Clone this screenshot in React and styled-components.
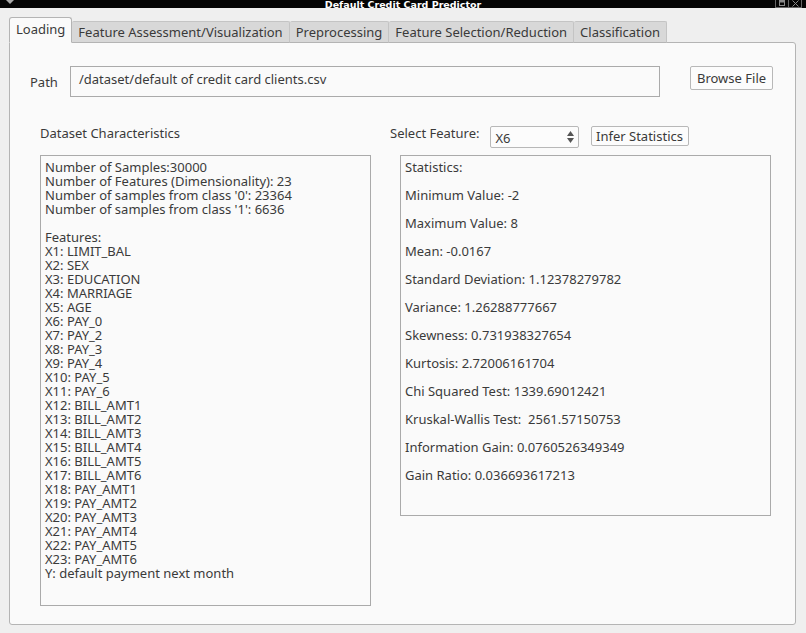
import React from "react"
import styled, { createGlobalStyle } from "styled-components"

const GlobalStyle = createGlobalStyle`
  html, body {
    margin: 0;
    padding: 0;
    background: #efefef;
  }
  body {
    font-family: "Noto Sans", "Open Sans", sans-serif;
    font-size: 13px;
    color: #3a3a3a;
  }
`

const Window = styled.div`
  width: 806px;
  height: 633px;
  display: flex;
  flex-direction: column;
  background: #efefef;
  overflow: hidden;
`

const TitleBar = styled.div`
  height: 9px;
  background: #050505;
  display: flex;
  align-items: center;
  justify-content: space-between;
  position: relative;
  padding: 0 4px 0 4px;
`

const TitleText = styled.div`
  position: absolute;
  left: 0;
  right: 0;
  top: 0;
  text-align: center;
  color: #fff;
  font-weight: bold;
  font-size: 9.5px;
  line-height: 9px;
  font-family: "DejaVu Sans", sans-serif;
`

const WinButtons = styled.div`
  display: flex;
  margin-top: -1px;
  position: relative;
  z-index: 1;
`

const WinButton = styled.div`
  width: 12px;
  height: 8px;
  border: 1px solid #666;
  border-top: none;
  display: flex;
  align-items: center;
  justify-content: center;
  & + & {
    border-left: none;
  }
`

const Body = styled.div`
  flex: 1;
  padding: 9px 10px 8px 9px;
  display: flex;
  flex-direction: column;
`

const TabBar = styled.div`
  display: flex;
  align-items: flex-end;
  height: 26px;
  position: relative;
  z-index: 1;
  margin-bottom: -1px;
`

const Tab = styled.div`
  height: ${p => (p.$active ? "26px" : "22px")};
  padding: 0 6px;
  display: flex;
  align-items: center;
  font-size: 13px;
  white-space: nowrap;
  box-sizing: border-box;
  background: ${p => (p.$active ? "#fafafa" : "#d8d8d8")};
  border: 1px solid ${p => (p.$active ? "#b4b4b4" : "#c4c4c4")};
  border-bottom: ${p => (p.$active ? "1px solid #fafafa" : "1px solid #b4b4b4")};
  border-left: ${p => (p.$first || p.$active ? "" : "none")};
  border-radius: ${p => (p.$active ? "3px 3px 0 0" : "2px 2px 0 0")};
  color: #3a3a3a;
  padding-bottom: ${p => (p.$active ? "2px" : "0")};
`

const Panel = styled.div`
  flex: 1;
  background: #fafafa;
  border: 1px solid #b4b4b4;
  border-radius: 0 3px 3px 3px;
  display: flex;
  flex-direction: column;
  padding: 22px 22px 18px 20px;
`

const PathRow = styled.div`
  display: flex;
  align-items: center;
  height: 32px;
`

const Label = styled.span`
  font-size: 13px;
  color: #3a3a3a;
  white-space: nowrap;
`

const PathLabel = styled(Label)`
  width: 40px;
  padding-top: 1px;
`

const PathInput = styled.div`
  width: 591px;
  height: 31px;
  box-sizing: border-box;
  border: 1px solid #aaaaaa;
  background: #fafafa;
  padding: 3px 8px 0;
  font-size: 13px;
  display: flex;
  align-items: flex-start;
`

const Button = styled.div`
  height: ${p => p.$h || 24}px;
  box-sizing: border-box;
  padding: 0 6px;
  border: 1px solid #b8b8b8;
  border-radius: 2px;
  background: #fcfcfc;
  display: flex;
  align-items: center;
  justify-content: center;
  font-size: 13px;
  white-space: nowrap;
  color: #3a3a3a;
`

const BrowseButton = styled(Button)`
  margin-left: 30px;
  margin-top: -6px;
  width: 83px;
`

const InferButton = styled(Button)`
  margin-left: 2px;
  margin-top: 1px;
  width: 98px;
`

const Columns = styled.div`
  flex: 1;
  display: flex;
  margin-top: 28px;
  padding-left: 10px;
`

const LeftCol = styled.div`
  width: 331px;
  display: flex;
  flex-direction: column;
`

const RightCol = styled.div`
  margin-left: 19px;
  width: 381px;
  display: flex;
  flex-direction: column;
`

const ColHeader = styled.div`
  height: 30px;
  display: flex;
  align-items: flex-start;
  gap: 10px;
`

const HeaderLabel = styled(Label)`
  margin-top: -1px;
`

const TextBox = styled.div`
  box-sizing: border-box;
  border: 1px solid #aaaaaa;
  background: #fafafa;
  padding: 4px 4px;
  font-size: 13px;
  line-height: 14px;
  white-space: pre;
  color: #3a3a3a;
  height: ${p => p.$h}px;
  margin-left: ${p => p.$ml || 0}px;
  width: ${p => p.$w}px;
`

const SpinBox = styled.div`
  width: 89px;
  height: 22px;
  margin-top: 1px;
  box-sizing: border-box;
  border: 1px solid #b8b8b8;
  border-radius: 2px;
  background: #fcfcfc;
  display: flex;
  align-items: center;
  justify-content: space-between;
  padding: 0 4px 0 5px;
  font-size: 13px;
`

const SpinValue = styled.span`
  padding-top: 1px;
`

const Arrows = styled.div`
  display: flex;
  flex-direction: column;
  gap: 2px;
`

const datasetText = `Number of Samples:30000
Number of Features (Dimensionality): 23
Number of samples from class '0': 23364
Number of samples from class '1': 6636

Features:
X1: LIMIT_BAL
X2: SEX
X3: EDUCATION
X4: MARRIAGE
X5: AGE
X6: PAY_0
X7: PAY_2
X8: PAY_3
X9: PAY_4
X10: PAY_5
X11: PAY_6
X12: BILL_AMT1
X13: BILL_AMT2
X14: BILL_AMT3
X15: BILL_AMT4
X16: BILL_AMT5
X17: BILL_AMT6
X18: PAY_AMT1
X19: PAY_AMT2
X20: PAY_AMT3
X21: PAY_AMT4
X22: PAY_AMT5
X23: PAY_AMT6
Y: default payment next month`

const stats = [
  "Statistics:",
  "Minimum Value: -2",
  "Maximum Value: 8",
  "Mean: -0.0167",
  "Standard Deviation: 1.12378279782",
  "Variance: 1.26288777667",
  "Skewness: 0.731938327654",
  "Kurtosis: 2.72006161704",
  "Chi Squared Test: 1339.69012421",
  "Kruskal-Wallis Test:  2561.57150753",
  "Information Gain: 0.0760526349349",
  "Gain Ratio: 0.036693617213",
]

const tabs = [
  "Loading",
  "Feature Assessment/Visualization",
  "Preprocessing",
  "Feature Selection/Reduction",
  "Classification",
]

const App = () => {
  return (
    <>
      <GlobalStyle />
      <Window>
        <TitleBar>
          <svg width="8" height="5" viewBox="0 0 8 5" style={{ marginTop: -3, marginLeft: 2 }}>
            <path d="M0 0 L8 0 L4 4 Z" fill="#aaa" />
          </svg>
          <TitleText>Default Credit Card Predictor</TitleText>
          <WinButtons>
            <WinButton>
              <svg width="6" height="6" viewBox="0 0 6 6">
                <rect x="0.5" y="0.5" width="5" height="5" fill="none" stroke="#888" />
                <rect x="0.5" y="0.5" width="5" height="2" fill="#888" />
              </svg>
            </WinButton>
            <WinButton>
              <svg width="7" height="7" viewBox="0 0 7 7">
                <path d="M0.5 0.5 L6.5 6.5 M6.5 0.5 L0.5 6.5" stroke="#888" strokeWidth="1" />
              </svg>
            </WinButton>
          </WinButtons>
        </TitleBar>
        <Body>
          <TabBar>
            {tabs.map((t, i) => (
              <Tab key={t} $active={i === 0} $first={i === 0}>
                {t}
              </Tab>
            ))}
          </TabBar>
          <Panel>
            <PathRow>
              <PathLabel>Path</PathLabel>
              <PathInput>/dataset/default of credit card clients.csv</PathInput>
              <BrowseButton>Browse File</BrowseButton>
            </PathRow>
            <Columns>
              <LeftCol>
                <ColHeader>
                  <HeaderLabel>Dataset Characteristics</HeaderLabel>
                </ColHeader>
                <TextBox $h={451} $w={331}>{datasetText}</TextBox>
              </LeftCol>
              <RightCol>
                <ColHeader>
                  <HeaderLabel>Select Feature:</HeaderLabel>
                  <SpinBox>
                    <SpinValue>X6</SpinValue>
                    <Arrows>
                      <svg width="7" height="5" viewBox="0 0 7 5">
                        <path d="M0 5 L3.5 0 L7 5 Z" fill="#555" />
                      </svg>
                      <svg width="7" height="5" viewBox="0 0 7 5">
                        <path d="M0 0 L3.5 5 L7 0 Z" fill="#555" />
                      </svg>
                    </Arrows>
                  </SpinBox>
                  <InferButton $h={20}>Infer Statistics</InferButton>
                </ColHeader>
                <TextBox $h={361} $w={371} $ml={10}>{stats.join("\n\n")}</TextBox>
              </RightCol>
            </Columns>
          </Panel>
        </Body>
      </Window>
    </>
  )
}

export default App
